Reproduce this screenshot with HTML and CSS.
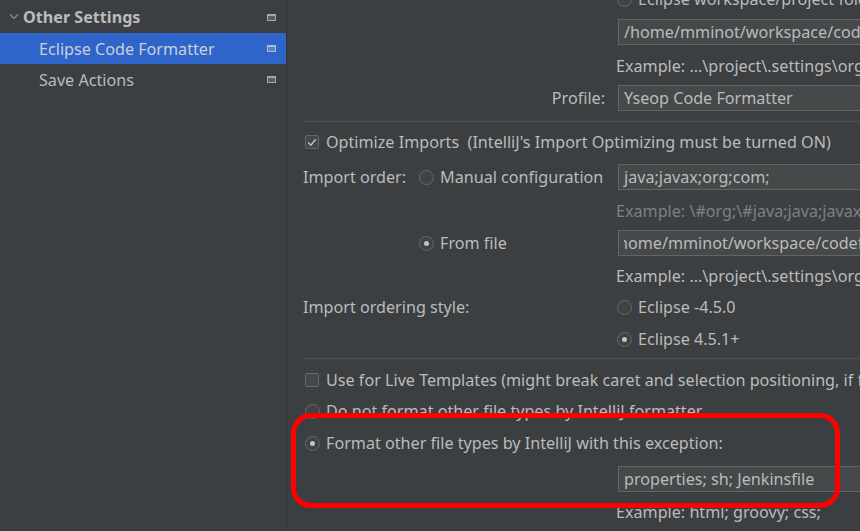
FILE: index.html
```html
<!DOCTYPE html>
<html>
<head>
<meta charset="utf-8">
<link rel="stylesheet" href="styles.css">
</head>
<body>
<div class="app">
  <aside class="sidebar">
    <div class="tree-row group">
      <svg class="chevron" width="10" height="6" viewBox="0 0 10 6"><path d="M1 0.5 L5 4.5 L9 0.5" fill="none" stroke="#8a8d90" stroke-width="1.2"/></svg>
      <span class="tree-label">Other Settings</span>
      <svg class="win" width="9" height="7" viewBox="0 0 9 7"><rect x="0.5" y="0.5" width="8" height="6" fill="#5b5f63" stroke="#a3a7ab"/><rect x="0" y="0" width="9" height="2" fill="#a3a7ab"/></svg>
    </div>
    <div class="tree-row child selected">
      <span class="tree-label">Eclipse Code Formatter</span>
      <svg class="win" width="9" height="7" viewBox="0 0 9 7"><rect x="0.5" y="0.5" width="8" height="6" fill="#5d84c4" stroke="#a9bddc"/><rect x="0" y="0" width="9" height="2" fill="#a9bddc"/></svg>
    </div>
    <div class="tree-row child">
      <span class="tree-label">Save Actions</span>
      <svg class="win" width="9" height="7" viewBox="0 0 9 7"><rect x="0.5" y="0.5" width="8" height="6" fill="#5b5f63" stroke="#a3a7ab"/><rect x="0" y="0" width="9" height="2" fill="#a3a7ab"/></svg>
    </div>
  </aside>
  <div class="divider"></div>
  <main class="content">
    <div class="form">
      <div class="row r-a">
        <div class="left"></div>
        <div class="right opt"><span class="radio"></span><span>Eclipse workspace/project folder or config file</span></div>
      </div>
      <div class="row r-b">
        <div class="left"></div>
        <div class="right"><div class="field">/home/mminot/workspace/codeformatter/formatter.xml</div></div>
      </div>
      <div class="row r-c">
        <div class="left"></div>
        <div class="right"><span class="example">Example: ...\project\.settings\org.eclipse.jdt.core.prefs</span></div>
      </div>
      <div class="row r-d">
        <div class="left label-right">Profile:</div>
        <div class="right"><div class="field">Yseop Code Formatter</div></div>
      </div>
      <div class="sep s1"></div>
      <div class="row r-e">
        <div class="opt"><span class="checkbox checked"><svg width="10" height="9" viewBox="0 0 10 9"><path d="M1.2 4.6 L3.8 7.2 L8.8 1.2" fill="none" stroke="#c4c4c4" stroke-width="1.4"/></svg></span><span class="pre">Optimize Imports  (IntelliJ's Import Optimizing must be turned ON)</span></div>
      </div>
      <div class="row r-f">
        <div class="left split"><span class="lab">Import order:</span><span class="opt"><span class="radio"></span><span>Manual configuration</span></span></div>
        <div class="right"><div class="field">java;javax;org;com;</div></div>
      </div>
      <div class="row r-g">
        <div class="left"></div>
        <div class="right"><span class="example disabled">Example: \#org;\#java;java;javax;org;com;</span></div>
      </div>
      <div class="row r-h">
        <div class="left split"><span class="lab"></span><span class="opt"><span class="radio on"></span><span>From file</span></span></div>
        <div class="right"><div class="field"><div class="clip"><span class="scrolled">home/mminot/workspace/codeformatter/imports.importorder</span></div></div></div>
      </div>
      <div class="row r-i">
        <div class="left"></div>
        <div class="right"><span class="example">Example: ...\project\.settings\org.eclipse.jdt.ui.prefs</span></div>
      </div>
      <div class="row r-j">
        <div class="left">Import ordering style:</div>
        <div class="right opt"><span class="radio"></span><span>Eclipse -4.5.0</span></div>
      </div>
      <div class="row r-k">
        <div class="left"></div>
        <div class="right opt"><span class="radio on"></span><span>Eclipse 4.5.1+</span></div>
      </div>
      <div class="sep s2"></div>
      <div class="row r-l">
        <div class="opt"><span class="checkbox"></span><span>Use for Live Templates (might break caret and selection positioning, if formatter changes)</span></div>
      </div>
      <div class="row r-m">
        <div class="opt"><span class="radio"></span><span>Do not format other file types by IntelliJ formatter</span></div>
      </div>
      <div class="row r-n">
        <div class="opt"><span class="radio on"></span><span>Format other file types by IntelliJ with this exception:</span></div>
      </div>
      <div class="row r-o">
        <div class="left"></div>
        <div class="right"><div class="field">properties; sh; Jenkinsfile</div></div>
      </div>
      <div class="row r-p">
        <div class="left"></div>
        <div class="right"><span class="example">Example: html; groovy; css;</span></div>
      </div>
    </div>
    <div class="highlight"></div>
  </main>
</div>
</body>
</html>
```
FILE: styles.css
```css
* { box-sizing: border-box; }
html, body { margin: 0; padding: 0; background: #3c3f41; }
body {
  font-family: "Noto Sans", "DejaVu Sans", sans-serif;
  font-size: 16.15px;
  color: #bbbbbb;
}
.app {
  display: flex;
  width: 860px;
  height: 531px;
  overflow: hidden;
}
.sidebar {
  width: 286px;
  flex: none;
  background: #3b3f43;
  padding-top: 1px;
}
.divider {
  width: 1px;
  flex: none;
  background: #303234;
}
.tree-row {
  height: 31px;
  display: flex;
  align-items: center;
  padding-right: 10px;
  white-space: nowrap;
}
.tree-row.group { padding-left: 9px; height: 32px; }
.tree-row.group .tree-label { font-weight: 700; margin-left: 4px; }
.tree-row.child { padding-left: 39px; }
.tree-row.selected { background: #2f65ca; color: #c9d0d8; }
.chevron { flex: none; }
.tree-label { flex: 1; }
.win { flex: none; }

.content {
  flex: 1;
  position: relative;
  overflow: hidden;
  padding-left: 16px;
}
.form {
  margin-top: -12px;
  display: flex;
  flex-direction: column;
  width: 760px;
}
.row {
  display: flex;
  align-items: center;
  white-space: nowrap;
}
.left {
  width: 312px;
  flex: none;
}
.label-right { text-align: right; padding-right: 10px; }
.split { display: flex; align-items: center; }
.split .lab { width: 116px; flex: none; }
.right { flex: none; display: flex; align-items: center; }
.opt { display: flex; align-items: center; }
.pre { white-space: pre; }

.r-a { height: 22px; }
.r-b { height: 44px; }
.r-c { height: 24px; }
.r-d { height: 40px; }
.r-e { height: 34px; }
.r-f { height: 36px; }
.r-g { height: 32px; }
.r-h { height: 32px; }
.r-i { height: 34px; }
.r-j { height: 28px; }
.r-k { height: 36px; }
.r-l { height: 36px; }
.r-m { height: 26px; }
.r-n { height: 38px; }
.r-o { height: 34px; }
.r-p { height: 32px; }

.sep { height: 1px; background: #4e5254; }
.s1 { margin: 3px 0; }
.s2 { margin: 1px 0 3px; }

.field {
  margin-left: 3px;
  width: 300px;
  height: 26px;
  background: #45494a;
  border: 1px solid #646464;
  padding-left: 5px;
  display: flex;
  align-items: center;
  overflow: hidden;
}
.clip { overflow: hidden; width: 280px; }
.scrolled { display: block; margin-left: -6px; }
.example { margin-left: 1px; }
.example.disabled { color: #7d8083; }

.radio {
  width: 15px;
  height: 15px;
  border: 1px solid #676a6d;
  border-radius: 50%;
  background: #3f4345;
  margin-right: 6px;
  flex: none;
  display: flex;
  align-items: center;
  justify-content: center;
}
.right.opt .radio { margin-left: 2px; }
.radio.on::after {
  content: "";
  width: 5px;
  height: 5px;
  border-radius: 50%;
  background: #c4c4c4;
}
.r-m .radio, .r-n .radio { margin-left: 2px; }
.checkbox {
  width: 14px;
  height: 14px;
  border: 1px solid #65686b;
  border-radius: 2px;
  background: #43474a;
  margin-left: 2px;
  margin-right: 7px;
  flex: none;
  display: flex;
  align-items: center;
  justify-content: center;
}

.highlight {
  position: absolute;
  left: 4px;
  top: 413px;
  width: 549px;
  height: 95px;
  border: 5px solid #ff0000;
  border-radius: 20px;
  pointer-events: none;
}
```
